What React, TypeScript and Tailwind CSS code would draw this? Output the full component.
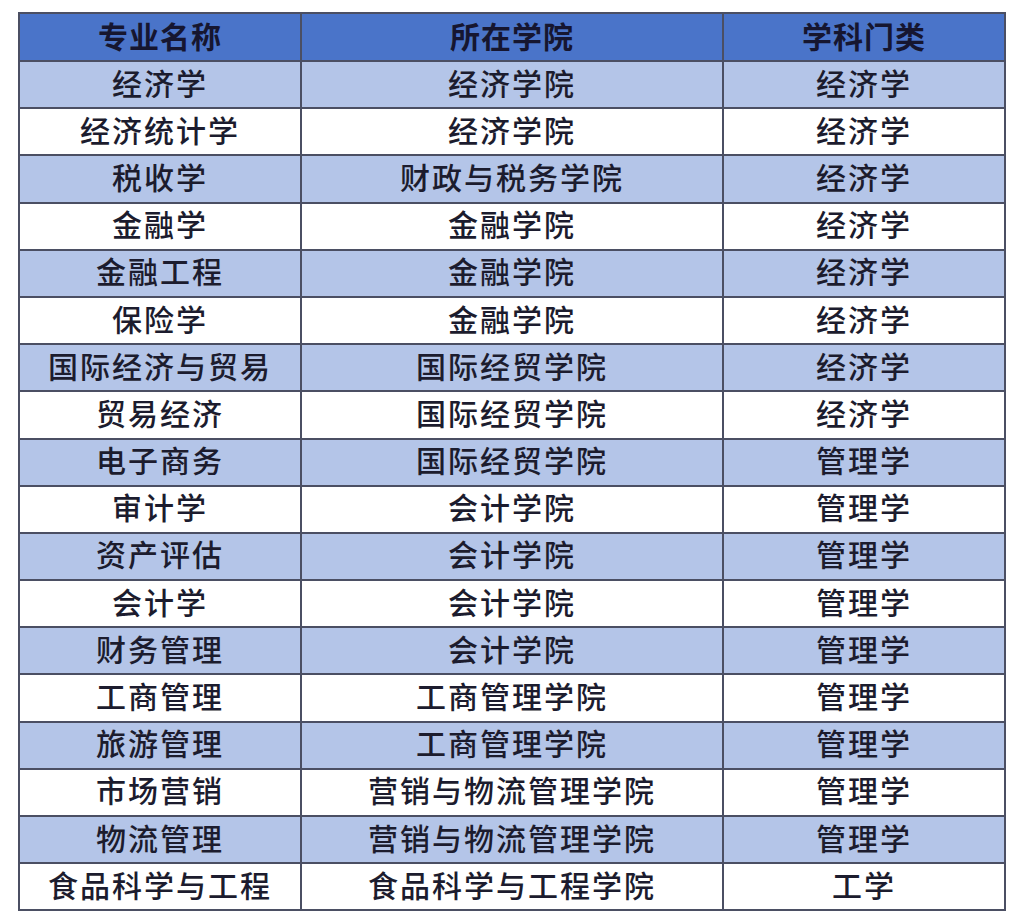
const rows: [string, string, string][] = [
  ['经济学', '经济学院', '经济学'],
  ['经济统计学', '经济学院', '经济学'],
  ['税收学', '财政与税务学院', '经济学'],
  ['金融学', '金融学院', '经济学'],
  ['金融工程', '金融学院', '经济学'],
  ['保险学', '金融学院', '经济学'],
  ['国际经济与贸易', '国际经贸学院', '经济学'],
  ['贸易经济', '国际经贸学院', '经济学'],
  ['电子商务', '国际经贸学院', '管理学'],
  ['审计学', '会计学院', '管理学'],
  ['资产评估', '会计学院', '管理学'],
  ['会计学', '会计学院', '管理学'],
  ['财务管理', '会计学院', '管理学'],
  ['工商管理', '工商管理学院', '管理学'],
  ['旅游管理', '工商管理学院', '管理学'],
  ['市场营销', '营销与物流管理学院', '管理学'],
  ['物流管理', '营销与物流管理学院', '管理学'],
  ['食品科学与工程', '食品科学与工程学院', '工学'],
];

export default function App() {
  return (
    <div className="w-[1022px] h-[920px] bg-white pt-[12px] pl-[18px] font-['Noto_Sans_CJK_SC',sans-serif]">
      <table className="w-[986px] border-collapse table-fixed text-[#1c1c2e]">
        <colgroup>
          <col className="w-[282px]" />
          <col className="w-[422px]" />
          <col className="w-[282px]" />
        </colgroup>
        <thead>
          <tr className="h-[48px] bg-[#4a74c9]">
            {['专业名称', '所在学院', '学科门类'].map(h => (
              <th
                key={h}
                className="border-2 border-[#4b4f63] text-[30px] font-bold tracking-[1px] leading-none text-[#161630] p-0 pb-[5px]"
              >
                {h}
              </th>
            ))}
          </tr>
        </thead>
        <tbody>
          {rows.map((r, i) => (
            <tr key={i} className={`h-[47.2px] ${i % 2 === 0 ? 'bg-[#b4c5e8]' : 'bg-white'}`}>
              {r.map((c, j) => (
                <td
                  key={j}
                  className="border-2 border-[#4b4f63] text-center text-[30px] font-medium tracking-[2px] leading-none p-0 pb-[6px]"
                >
                  {c}
                </td>
              ))}
            </tr>
          ))}
        </tbody>
      </table>
    </div>
  );
}
